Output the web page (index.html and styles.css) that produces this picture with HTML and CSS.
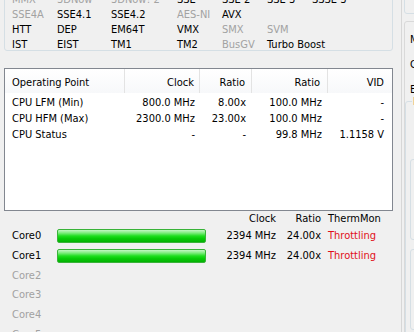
FILE: index.html
```html
<!DOCTYPE html>
<html>
<head>
    <meta charset="UTF-8">
    <link rel="stylesheet" href="styles.css">
</head>
<body>
    <div class="window">
        <div class="main">
            <div class="features">
                <div class="feat-row">
                    <span class="off">MMX</span><span class="off">3DNow</span><span class="off">3DNow! 2</span><span>SSE</span><span>SSE 2</span><span>SSE 3</span><span>SSSE 3</span>
                </div>
                <div class="feat-row">
                    <span class="off">SSE4A</span><span>SSE4.1</span><span>SSE4.2</span><span class="off">AES-NI</span><span>AVX</span>
                </div>
                <div class="feat-row">
                    <span>HTT</span><span>DEP</span><span>EM64T</span><span>VMX</span><span class="off">SMX</span><span class="off">SVM</span>
                </div>
                <div class="feat-row">
                    <span>IST</span><span>EIST</span><span>TM1</span><span>TM2</span><span class="off">BusGV</span><span>Turbo Boost</span>
                </div>
            </div>

            <div class="oplist">
                <div class="op-head">
                    <div class="cell first">Operating Point</div>
                    <div class="cell">Clock</div>
                    <div class="cell">Ratio</div>
                    <div class="cell">Ratio</div>
                    <div class="cell last">VID</div>
                </div>
                <div class="op-rows">
                    <div class="op-row">
                        <div class="cell first">CPU LFM (Min)</div>
                        <div class="cell">800.0 MHz</div>
                        <div class="cell">8.00x</div>
                        <div class="cell">100.0 MHz</div>
                        <div class="cell last">-</div>
                    </div>
                    <div class="op-row">
                        <div class="cell first">CPU HFM (Max)</div>
                        <div class="cell">2300.0 MHz</div>
                        <div class="cell">23.00x</div>
                        <div class="cell">100.0 MHz</div>
                        <div class="cell last">-</div>
                    </div>
                    <div class="op-row">
                        <div class="cell first">CPU Status</div>
                        <div class="cell">-</div>
                        <div class="cell">-</div>
                        <div class="cell">99.8 MHz</div>
                        <div class="cell last">1.1158 V</div>
                    </div>
                </div>
            </div>

            <div class="cores">
                <div class="core-head">
                    <span></span><span></span>
                    <span class="num">Clock</span>
                    <span class="num">Ratio</span>
                    <span class="therm">ThermMon</span>
                </div>
                <div class="core-row">
                    <span>Core0</span><div class="bar"></div>
                    <span class="num">2394 MHz</span><span class="num">24.00x</span><span class="therm hot">Throttling</span>
                </div>
                <div class="core-row">
                    <span>Core1</span><div class="bar"></div>
                    <span class="num">2394 MHz</span><span class="num">24.00x</span><span class="therm hot">Throttling</span>
                </div>
                <div class="core-row off"><span>Core2</span></div>
                <div class="core-row off"><span>Core3</span></div>
                <div class="core-row off"><span>Core4</span></div>
                <div class="core-row off"><span>Core5</span></div>
            </div>
        </div>

        <div class="side">
            <div class="side-inner">
                <div class="side-top"></div>
                <div class="side-panel">
                    <div class="side-label">M</div>
                    <div class="side-label">C</div>
                    <div class="side-label">E</div>
                    <div class="side-group">
                        <span class="side-legend">M</span>
                        <div class="side-box"></div>
                        <div class="side-box"></div>
                    </div>
                </div>
            </div>
        </div>
    </div>
</body>
</html>
```

FILE: styles.css
```css
* {
    margin: 0;
    padding: 0;
    box-sizing: border-box;
}

body {
    background: #f0f0f0;
    font-family: 'DejaVu Sans Condensed', 'DejaVu Sans', sans-serif;
    font-stretch: condensed;
    font-size: 11px;
    color: #000;
    overflow: hidden;
    height: 332px;
}

.window {
    display: flex;
    height: 332px;
}

.main {
    width: 400px;
    flex-shrink: 0;
}

.off {
    color: #a2a2a2;
}

/* feature flags */
.features {
    margin: -12px 7px 0 4px;
    height: 63px;
    border: 1px solid #d5dfe5;
    border-radius: 3px;
    padding: 3px 0 0 7px;
}

.feat-row {
    display: grid;
    grid-template-columns: 45px 54px 66px 45px 45px 45px auto;
    height: 15px;
    line-height: 15px;
    white-space: nowrap;
}

/* operating point list */
.oplist {
    margin: 17px 7px 0 4px;
    height: 143px;
    background: #fff;
    border: 1px solid #828790;
}

.op-head,
.op-row {
    display: grid;
    grid-template-columns: 120px 75px 52px 76px 1fr;
    white-space: nowrap;
}

.op-head .cell {
    height: 24px;
    line-height: 21px;
    padding-top: 3px;
    border-right: 1px solid #e3e3e3;
    background: linear-gradient(#ffffff, #f7f8fa);
}

.op-head .cell.last {
    border-right: none;
}

.op-rows {
    padding-top: 2px;
}

.op-row .cell {
    height: 16px;
    line-height: 16px;
}

.cell {
    text-align: right;
    padding-right: 6px;
}

.cell:nth-child(2) {
    padding-right: 5px;
}

.op-head .cell:nth-child(4) {
    padding-right: 7px;
}

.cell.first {
    text-align: left;
    padding-left: 7px;
}

.cell.last {
    padding-right: 8px;
}

/* cores */
.cores {
    padding: 1px 0 0 12px;
}

.core-head,
.core-row {
    display: grid;
    grid-template-columns: 45px 149px 70px 45px auto;
    align-items: center;
    white-space: nowrap;
}

.core-head {
    height: 14px;
    line-height: 14px;
}

.core-row {
    height: 19.7px;
}

.num {
    text-align: right;
}

.therm {
    padding-left: 7px;
}

.hot {
    color: #e0101a;
}

.bar {
    height: 14px;
    border: 1px solid #39b339;
    border-radius: 2px;
    background: linear-gradient(#c4f7c4 0%, #7cec7c 25%, #1ede1e 50%, #08cc08 70%, #03b103 100%);
}

/* right edge panel */
.side {
    width: 14px;
    padding-left: 1px;
    overflow: hidden;
}

.side-inner {
    width: 200px;
    height: 332px;
    border-left: 1px solid #d7d7d7;
    padding-left: 2px;
    overflow: hidden;
}

.side-top {
    margin-top: -20px;
    height: 34px;
    border: 1px solid #d5dfe5;
    border-radius: 3px;
}

.side-panel {
    height: 330px;
    margin-top: 7px;
    border: 1px solid #d9d9d9;
    border-radius: 3px;
    padding-top: 5px;
}

.side-label {
    height: 25px;
    line-height: 25px;
    padding-left: 5px;
}

.side-group {
    margin-top: -1px;
    height: 240px;
    border: 1px solid #d5dfe5;
    border-radius: 3px;
    padding: 0 0 0 4px;
}

.side-legend {
    display: inline-block;
    margin: -7px 0 0 2px;
    padding: 0 1px;
    line-height: 13px;
    background: #f0f0f0;
    vertical-align: top;
}

.side-box {
    margin-top: 44px;
    height: 81px;
    border: 1px solid #d5dfe5;
    border-radius: 3px;
}

.side-box + .side-box {
    margin-top: 9px;
}
```
